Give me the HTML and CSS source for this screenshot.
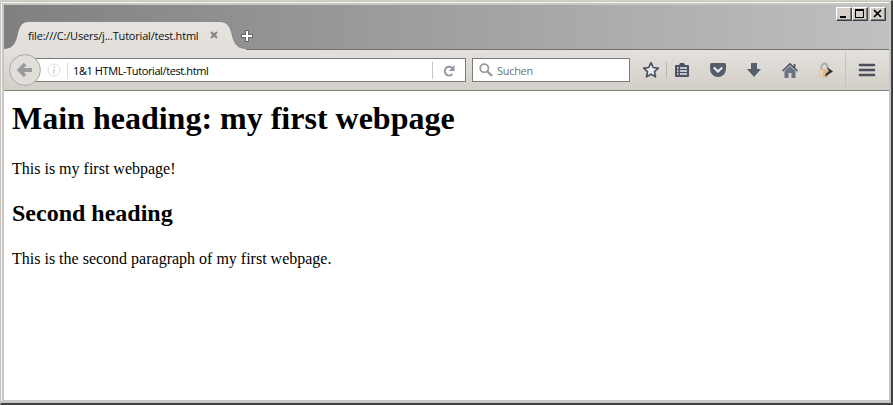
FILE: index.html
```html
<!DOCTYPE html>
<html lang="en">
<head>
<meta charset="utf-8">
<title>1&amp;1 HTML-Tutorial</title>
<link rel="stylesheet" href="styles.css">
</head>
<body>
<div class="window">
  <div class="inner">
    <header class="titlebar">
      <div class="tab">
        <svg class="tab-shape" width="243" height="29" viewBox="0 0 243 29">
          <defs><linearGradient id="tg" x1="0" y1="0" x2="0" y2="1"><stop offset="0" stop-color="#e7e4e0"/><stop offset="1" stop-color="#e2dfdb"/></linearGradient></defs>
          <path d="M0 29V27.500C8 27.500 11 23 13 15C15 6 17 .5 25 .5H215C223 .5 226 5 228 13C230 22 233 27.500 242 27.500V29Z" fill="url(#tg)"/>
          <path d="M0 27.500C8 27.500 11 23 13 15C15 6 17 .5 25 .5H215C223 .5 226 5 228 13C230 22 233 27.500 242 27.500" fill="none" stroke="#6c6c6c" stroke-opacity=".6"/>
        </svg>
        <span class="tab-label">file:///C:/Users/j...Tutorial/test.html</span>
        <svg class="tab-close" width="8" height="8" viewBox="0 0 8 8"><path d="M1 1L7 7M7 1L1 7" stroke="#858585" stroke-width="2.200"/></svg>
      </div>
      <svg class="new-tab" width="12" height="12" viewBox="0 0 12 12"><path d="M6 0V12M0 6H12" stroke="#666" stroke-width="4"/><path d="M6 1V11M1 6H11" stroke="#fff" stroke-width="2"/></svg>
      <div class="controls">
        <span class="ctl"><svg width="16" height="14" viewBox="0 0 16 14"><path d="M4 9H10V11H4Z"/></svg></span>
        <span class="ctl"><svg width="16" height="14" viewBox="0 0 16 14"><path d="M3 2H12V11H3ZM4 4V10H11V4Z" fill-rule="evenodd"/></svg></span>
        <span class="ctl last"><svg width="16" height="14" viewBox="0 0 16 14"><path d="M4 3L11 10M11 3L4 10" stroke="#000" stroke-width="1.700"/></svg></span>
      </div>
    </header>
    <nav class="toolbar">
      <div class="back"><svg width="32" height="32" viewBox="0 0 32 32"><circle cx="16" cy="16" r="15.400" fill="#e1deda" stroke="#aaa8a5"/><path d="M16 10L10.500 16L16 22M11 16H23" fill="none" stroke="#9a9b9d" stroke-width="3.800"/></svg></div>
      <div class="address">
        <svg class="info" width="14" height="14" viewBox="0 0 14 14"><circle cx="7" cy="7" r="6" fill="none" stroke="#dedede"/><path d="M7 3V4.700M7 6V10.500" stroke="#d5d5d5" stroke-width="1.600"/></svg>
        <span class="url">1&amp;1 HTML-Tutorial/test.html</span>
        <span class="reload"><svg width="14" height="14" viewBox="0 0 14 14"><path d="M10.300 10A4.300 4.300 0 1 1 9.800 3.800" fill="none" stroke="#8f97a3" stroke-width="2"/><path d="M12.500 1V7H6.800Z" fill="#8f97a3"/></svg></span>
      </div>
      <div class="search">
        <svg width="14" height="14" viewBox="0 0 14 14"><circle cx="5.300" cy="5.300" r="4.100" fill="none" stroke="#999" stroke-width="1.800"/><path d="M8.200 8.200L13 13" stroke="#999" stroke-width="2.300"/></svg>
        <span class="hint">Suchen</span>
      </div>
      <div class="tools">
        <svg class="star" width="18" height="18" viewBox="0 0 18 18"><path d="M9 1.700L11.200 6.500L16.300 7.100L12.500 10.600L13.500 15.800L9 13.200L4.500 15.800L5.500 10.600L1.700 7.100L6.800 6.500Z" fill="#e8edf4" stroke="#4c5260" stroke-width="1.700" stroke-linejoin="round"/></svg>
        <i class="sep"></i>
        <svg class="list" width="16" height="16" viewBox="0 0 16 16"><path d="M2 3H5L6 1H10L11 3H14Q15 3 15 4V14Q15 15 14 15H2Q1 15 1 14V4Q1 3 2 3Z" fill="#4c5260"/><path d="M3 6H4.500M6 6H13M3 9H4.500M6 9H13M3 12H4.500M6 12H13" stroke="#e5ecf4" stroke-width="1.700"/></svg>
        <svg class="pocket" width="18" height="16" viewBox="0 0 18 16"><path d="M2.500 1H15.500Q17 1 17 2.500V7A8 8 0 0 1 1 7V2.500Q1 1 2.500 1Z" fill="#555d6a"/><path d="M4.800 5.500L9 9.500L13.200 5.500" fill="none" stroke="#e8f0fa" stroke-width="2.100"/></svg>
        <svg class="down" width="16" height="16" viewBox="0 0 16 16"><path d="M5 1H11V7H15L8 15L1 7H5Z" fill="#555e6b"/></svg>
        <svg class="home" width="18" height="17" viewBox="0 0 18 17"><path d="M3.500 9L9 4L14.500 9V16H10.500V11H7.500V16H3.500Z" fill="#687280"/><path d="M1.500 9L9 2L16.500 9M13.500 2V6" fill="none" stroke="#4d5562" stroke-width="1.700"/></svg>
        <svg class="lock" width="16" height="17" viewBox="0 0 16 17"><path d="M3.500 8V5A3 3.500 0 0 1 9.500 5V8" fill="none" stroke="#aaa9a5" stroke-width="1.800"/><path d="M1.500 7H10.500V15.500H1.500Z" fill="#ddb98e"/><path d="M2 8H5V15H2Z" fill="#ead0b0"/><path d="M9 5L15 9.500L11 12L7.500 14.500V12L11 9Z" fill="#2e2e30"/></svg>
        <i class="sep tall"></i>
        <svg class="menu" width="18" height="14" viewBox="0 0 18 14"><path d="M2 2H16M2 7H16M2 12H16" stroke="#4a515d" stroke-width="2.700" stroke-linecap="round"/></svg>
      </div>
    </nav>
    <main class="page">
      <h1>Main heading: my first webpage</h1>
      <p>This is my first webpage!</p>
      <h2>Second heading</h2>
      <p>This is the second paragraph of my first webpage.</p>
    </main>
  </div>
</div>
</body>
</html>
```
FILE: styles.css
```css
* { box-sizing: border-box; }
body { margin: 0; background: #d4d0c8; }
svg { display: block; flex: none; }
.window {
  width: 893px; height: 405px; padding: 1px 0 0;
  border: solid; border-width: 1px 2px 2px 1px;
  border-color: #d4d0c8 #404040 #404040 #c8c5c0;
  background: #c8c6c2;
}
.inner {
  height: 399px; width: 888px;
  border: solid #f6f5f2; border-width: 1px 0 0 1px;
  padding: 2px 0 0 2px;
}
.titlebar {
  height: 45px; display: flex; position: relative;
  background: linear-gradient(90deg, #808080, #c0c0c0);
  border-bottom: 1px solid #707070;
}
.tab { width: 242px; height: 29px; margin-top: 16px; position: relative; z-index: 1; display: flex; align-items: center; padding: 0 0 1px 24px; }
.tab-shape { position: absolute; left: 0; top: 0; }
.tab-label { position: relative; width: 182px; font: 11px "Open Sans", sans-serif; color: #111; white-space: nowrap; letter-spacing: -.2px; }
.tab-close { position: relative; }
.new-tab { margin: 25px 0 0 -5px; position: relative; z-index: 2; }
.controls { margin-left: auto; display: flex; margin-right: 3px; padding-top: 2px; }
.ctl {
  width: 16px; height: 14px; background: #d4d0c8; overflow: hidden;
  border: 1px solid; border-color: #fff #404040 #404040 #fff;
  box-shadow: inset -1px -1px #808080;
}
.ctl svg { margin: -1px 0 0 -1px; }
.last { margin-left: 2px; }
.toolbar {
  height: 41px; display: flex; align-items: center;
  padding-left: 5px; border-bottom: 1px solid #85837f;
  background: linear-gradient(#e4e1dd, #d3cfc7);
}
.back { width: 32px; position: relative; z-index: 1; }
.address {
  width: 434px; height: 24px; margin-left: -9px;
  display: flex; align-items: center;
  background: #fff; border: 1px solid #7c7b78; padding-left: 14px;
}
.url { font: 11px "Open Sans", sans-serif; color: #000; margin-left: 6px; padding-left: 5px; border-left: 1px solid #ddd; line-height: 17px; white-space: nowrap; letter-spacing: -.4px; }
.reload { margin-left: auto; height: 17px; width: 33px; border-left: 1px solid #c8c8c8; padding: 2px 0 0 9px; }
.search { width: 158px; height: 24px; margin-left: 6px; display: flex; align-items: center; padding-left: 6px; background: #fff; border: 1px solid #7c7b78; }
.hint { font: 11px "Open Sans", sans-serif; color: #737373; margin-left: 4px; letter-spacing: -.3px; }
.tools { flex: 1; display: flex; align-items: center; }
.star { margin-left: 12px; }
.sep { width: 1px; height: 16px; background: #b9b6b0; margin-left: 6px; }
.list { margin-left: 7px; }
.pocket { margin-left: 19px; }
.down { margin-left: 19px; }
.home { margin-left: 19px; }
.lock { margin-left: 19px; }
.tall { height: 36px; background: #c6c3bd; margin-left: 11px; }
.menu { margin-left: 12px; }
.page { height: 309px; background: #fff; padding: 9px 8px; overflow: hidden; font: 16px "Liberation Serif", serif; color: #000; }
h1 { font-size: 32px; line-height: 37px; margin: 0 0 23px; }
p { margin: 0; line-height: 18px; }
h2 { font-size: 24px; line-height: 27px; margin: 22px 0 23px; }
```
